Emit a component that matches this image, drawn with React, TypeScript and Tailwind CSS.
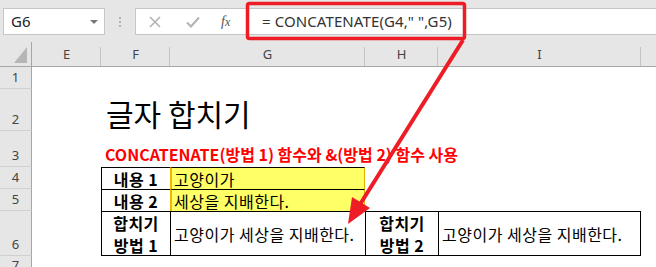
import React from 'react';

const cols = ['E', 'F', 'G', 'H', 'I'];
// full class names so Tailwind picks them up
const rowStarts = ['row-start-2', 'row-start-3', 'row-start-4', 'row-start-5', 'row-start-6', 'row-start-7', 'row-start-8'];

const latin = "font-[family-name:'Noto_Sans',sans-serif]";

const RowHead: React.FC<{ n: number }> = ({ n }) => (
  <div
    className={`col-start-1 ${rowStarts[n - 1]} bg-[#e6e6e6] border-r border-b border-r-[#a6a6a6] border-b-[#d0d0d0] flex items-end justify-center pb-[1px] text-[13px] text-[#444] ${latin}`}
  >
    {n}
  </div>
);

const cell = 'text-[16px] tracking-[0.5px] text-black';
const label = `${cell} font-bold flex items-center justify-center`;

export default function App() {
  return (
    <div className="relative w-[656px] h-[267px] overflow-hidden bg-white font-[family-name:'Noto_Sans_CJK_KR','Noto_Sans',sans-serif]">
      {/* formula bar */}
      <div className="h-[42px] bg-[#e6e6e6] flex items-start pt-[8px]">
        <div className="ml-[3px] w-[102px] h-[27px] bg-white border border-[#c6c6c6] flex items-center justify-between pl-[7px] pr-[6px]">
          <span className={`text-[15px] text-[#222] leading-none ${latin}`}>G6</span>
          <span className="w-0 h-0 border-l-[4px] border-r-[4px] border-t-[4px] border-l-transparent border-r-transparent border-t-[#777]" />
        </div>
        <div className="w-[30px] h-[27px] flex flex-col items-center justify-center gap-[2px]">
          <span className="w-[2px] h-[2px] bg-[#b4b4b4]" />
          <span className="w-[2px] h-[2px] bg-[#b4b4b4]" />
          <span className="w-[2px] h-[2px] bg-[#b4b4b4]" />
        </div>
        <div className="flex-1 h-[27px] bg-white border-y border-l border-[#c6c6c6] flex items-center">
          <div className="w-[110px] flex items-center">
            <svg width="12" height="12" viewBox="0 0 12 12" className="ml-[13px]">
              <path d="M1 1 L11 11 M11 1 L1 11" stroke="#b3b3b3" strokeWidth="1.6" />
            </svg>
            <svg width="14" height="12" viewBox="0 0 14 12" className="ml-[25px]">
              <path d="M1 6.5 L5 10.5 L13 1.5" stroke="#b3b3b3" strokeWidth="2" fill="none" />
            </svg>
            <span className="ml-[21px] text-[14px] italic text-[#555] leading-none font-[family-name:'Liberation_Serif',serif]">
              f<span className="text-[12px]">x</span>
            </span>
          </div>
          <span className={`ml-[16px] text-[15px] text-[#333] tracking-[0.1px] ${latin}`}>
            = CONCATENATE(G4,&quot; &quot;,G5)
          </span>
        </div>
      </div>

      {/* sheet */}
      <div className="grid h-[225px] grid-cols-[32px_69px_69px_195px_73px_203px_1fr] grid-rows-[25px_22px_42px_36px_22px_22px_45px_1fr]">
        {/* corner */}
        <div className="bg-[#e6e6e6] border-r border-b border-[#a6a6a6] flex items-end justify-end pr-[4px] pb-[3px]">
          <svg width="13" height="16" viewBox="0 0 13 16">
            <path d="M13 0 L13 16 L0 16 Z" fill="#b6b6b6" />
          </svg>
        </div>
        {cols.map((c) => (
          <div
            key={c}
            className={`relative bg-[#e6e6e6] border-b border-b-[#a6a6a6] flex items-center justify-center pt-[2px] text-[13px] text-[#444] ${latin}`}
          >
            {c}
            <span className="absolute right-0 top-[5px] bottom-0 w-px bg-[#c4c4c4]" />
          </div>
        ))}
        <div className="bg-[#e6e6e6] border-b border-b-[#a6a6a6]" />

        {[1, 2, 3, 4, 5, 6, 7].map((n) => (
          <RowHead key={n} n={n} />
        ))}

        {/* F2 title, F3 subtitle */}
        <div className="col-start-3 col-end-8 row-start-3 flex items-end pb-[3px] pl-[5px] whitespace-nowrap text-[30px] leading-none text-black">
          글자 합치기
        </div>
        <div className="col-start-3 col-end-8 row-start-4 flex items-end pb-[5px] pl-[4px] whitespace-nowrap text-[16px] font-bold text-[#ff0000] leading-none">
          CONCATENATE(방법 1) 함수와 &amp;(방법 2) 함수 사용
        </div>

        {/* row 4 */}
        <div className={`col-start-3 row-start-5 border-l border-t border-black ${label}`}>내용 1</div>
        <div className={`col-start-4 row-start-5 bg-[#ffff66] border-t border-black border-l-2 border-l-[#f2b705] border-r border-r-[#e0b000] flex items-center pl-[2px] ${cell}`}>
          고양이가
        </div>

        {/* row 5 */}
        <div className={`col-start-3 row-start-6 border-l border-t border-black ${label}`}>내용 2</div>
        <div className={`col-start-4 row-start-6 bg-[#ffff66] border-t border-black border-l-2 border-l-[#f2b705] border-r border-r-[#e0b000] flex items-center pl-[2px] ${cell}`}>
          세상을 지배한다.
        </div>

        {/* row 6 */}
        <div className={`col-start-3 row-start-7 border-l border-y border-black flex-col leading-[22px] ${label}`}>
          <span>합치기</span>
          <span>방법 1</span>
        </div>
        <div className={`col-start-4 row-start-7 border-l border-y border-black flex items-center pl-[3px] ${cell}`}>
          고양이가 세상을 지배한다.
        </div>
        <div className={`col-start-5 row-start-7 border-l border-y border-black flex-col leading-[22px] ${label}`}>
          <span>합치기</span>
          <span>방법 2</span>
        </div>
        <div className={`col-start-6 row-start-7 border border-black flex items-center pl-[3px] ${cell}`}>
          고양이가 세상을 지배한다.
        </div>
      </div>

      {/* annotation: red box round the formula and arrow to G6 */}
      <svg className="absolute inset-0 pointer-events-none" width="656" height="267" viewBox="0 0 656 267">
        <rect x="247.5" y="3.5" width="217" height="35" rx="2" fill="none" stroke="#ee1c25" strokeWidth="3.5" />
        <line x1="463" y1="40" x2="359" y2="206" stroke="#ee1c25" strokeWidth="4" />
        <path d="M348 224 L352 197 L370 208 Z" fill="#ee1c25" />
      </svg>
    </div>
  );
}
